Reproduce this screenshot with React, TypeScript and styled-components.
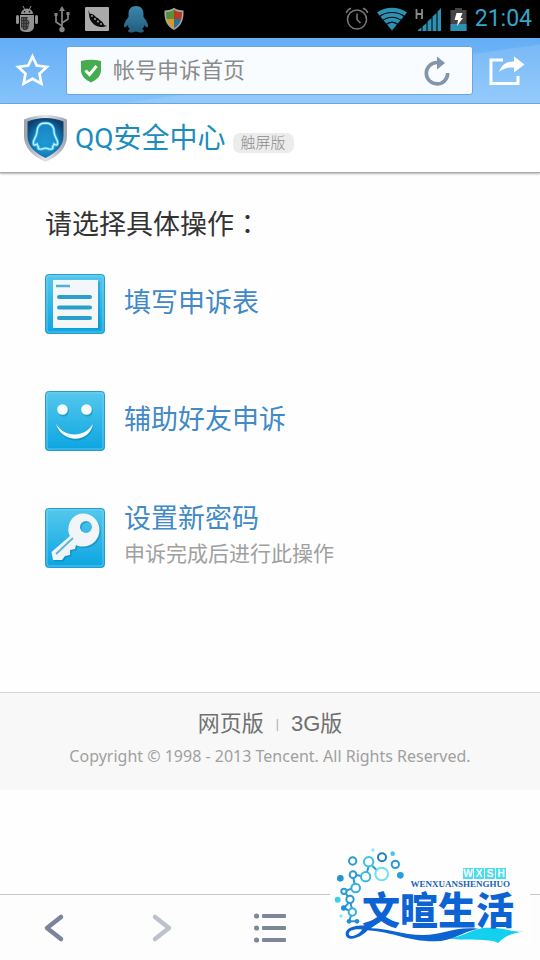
import React from "react";
import styled, { createGlobalStyle } from "styled-components";

const GlobalStyle = createGlobalStyle`
  *, *::before, *::after { box-sizing: border-box; }
  body {
    margin: 0;
    background: #fefefe;
    font-family: "Liberation Sans", "Noto Sans CJK SC", sans-serif;
    font-weight: 400;
    color: #333;
  }
  button, input { font: inherit; color: inherit; }
  svg { display: block; flex: none; }
`;

const Page = styled.div`
  display: flex;
  flex-direction: column;
  min-height: 100vh;
`;

const StatusBar = styled.div`
  display: flex;
  align-items: center;
  justify-content: space-between;
  height: 38px;
  padding: 0 8px 0 15px;
  background: #000;
`;

const IconGroup = styled.div<{ $gap: number }>`
  display: flex;
  align-items: center;
  gap: ${(p) => p.$gap}px;
`;

const Clock = styled.time`
  font-family: Roboto, sans-serif;
  font-size: 23px;
  line-height: 38px;
  color: #35a5cb;
`;

const BrowserBar = styled.div`
  display: flex;
  align-items: center;
  gap: 16px;
  height: 66px;
  padding: 0 15px;
  background:
    linear-gradient(172deg, transparent 58%, rgba(255, 255, 255, 0.12) 59%),
    linear-gradient(#64aef5, #85c3fb);
  border-bottom: 1px solid #6fa9dc;
`;

const IconButton = styled.button`
  display: flex;
  align-items: center;
  justify-content: center;
  padding: 0;
  border: 0;
  background: none;
  cursor: pointer;
`;

const AddressBar = styled.form`
  flex: 1;
  display: flex;
  align-items: center;
  gap: 11px;
  min-width: 0;
  height: 49px;
  padding: 0 22px 0 13px;
  background: #f9fcff;
  border: 1px solid #6da5da;
  border-radius: 3px;
`;

const AddressInput = styled.input`
  flex: 1;
  min-width: 0;
  padding: 0;
  border: 0;
  outline: 0;
  background: none;
  font-size: 22px;
  line-height: 32px;
  color: #8b8b8b;
`;

const SiteHeader = styled.header`
  display: flex;
  align-items: center;
  height: 69px;
  padding: 0 23px;
  background: #fff;
  border-bottom: 1px solid #aaa;
  box-shadow: 0 1px 2px rgba(0, 0, 0, 0.3);
`;

const SiteName = styled.h1`
  margin: 2px 7px 0 7px;
  font-family: Roboto, "Noto Sans CJK SC", sans-serif;
  font-size: 28px;
  line-height: 40px;
  font-weight: 400;
  color: #1a8cbd;
`;

const Edition = styled.span`
  margin-top: 10px;
  padding: 0 8px;
  border-radius: 7px;
  background: #ececec;
  font-size: 15px;
  line-height: 20px;
  font-weight: 300;
  color: #8c8c8c;
`;

const Main = styled.main`
  padding: 32px 45px 124px;
`;

const Heading = styled.h2`
  margin: 0 0 29px;
  font-size: 27px;
  line-height: 40px;
  font-weight: 400;
  color: #333;
`;

const CenteredMark = styled.span`
  font-family: "Noto Sans CJK TC", sans-serif;
  line-height: 1;
`;

const ActionList = styled.ul`
  display: flex;
  flex-direction: column;
  gap: 57px;
  margin: 0;
  padding: 0;
  list-style: none;
`;

const Action = styled.a`
  display: flex;
  align-items: center;
  gap: 19px;
  color: #4189c7;
  text-decoration: none;
`;

const ActionText = styled.span`
  display: flex;
  flex-direction: column;
  gap: 14px;
  padding-bottom: 2px;
`;

const ActionTitle = styled.span`
  font-size: 27px;
  line-height: 20px;
`;

const ActionNote = styled.span`
  font-size: 21px;
  line-height: 22px;
  color: #a0a0a0;
`;

const SiteFooter = styled.footer`
  padding: 15px 0 20px;
  background: #f8f8f8;
  border-top: 1px solid #d5d5d5;
  text-align: center;
`;

const Versions = styled.nav`
  display: flex;
  align-items: center;
  justify-content: center;
  gap: 12px;
  font-size: 22px;
  line-height: 32px;
  color: #707070;
`;

const VersionLink = styled.a`
  color: inherit;
  text-decoration: none;
`;

const Divider = styled.span`
  font-size: 12px;
  color: #aaa;
`;

const Copyright = styled.p`
  margin: 3px 0 0;
  font-family: "Noto Sans", sans-serif;
  font-size: 16px;
  line-height: 27px;
  color: #a0a0a0;
`;

const Toolbar = styled.nav`
  position: relative;
  display: grid;
  grid-template-columns: repeat(5, 1fr);
  height: 66px;
  margin-top: auto;
  background: #fdfdfd;
  border-top: 1px solid #c8c8cc;
`;

const Brand = styled.div`
  position: absolute;
  right: 10px;
  bottom: 16px;
  display: flex;
  flex-direction: column;
  align-items: flex-end;
  width: 200px;
  height: 100px;
  padding: 24px 16px 0 0;
  background: #fefefe;
`;

const BrandArt = styled.svg`
  position: absolute;
  inset: 0;
`;

const BrandTiles = styled.div`
  position: relative;
  display: flex;
  gap: 1px;
  margin-right: 8px;
`;

const BrandTile = styled.span`
  width: 10px;
  background: #4bdcf0;
  font-size: 10px;
  line-height: 11px;
  font-weight: 700;
  text-align: center;
  color: #fff;
`;

const BrandLatin = styled.span`
  position: relative;
  margin-right: 4px;
  font-family: "Liberation Serif", serif;
  font-size: 9px;
  line-height: 11px;
  font-weight: 700;
  color: #1b62b5;
`;

const BrandName = styled.strong`
  position: relative;
  font-family: "Noto Sans CJK SC", sans-serif;
  font-size: 38px;
  line-height: 36px;
  font-weight: 900;
  color: #0b63d4;
`;

const AndroidIcon = () => (
  <svg width="24" height="28" viewBox="0 0 24 28" fill="#929292">
    <path d="M6 9a6 5.5 0 0 1 12 0z" />
    <path d="M8 1l2 4M16 1l-2 4" stroke="#929292" strokeWidth="1" />
    <rect x="1" y="10" width="3" height="9" rx="1.5" />
    <rect x="20" y="10" width="3" height="9" rx="1.5" />
    <path d="M5 10h14v11c0 4-3 6-7 6-4 0-7-1-7-4z" />
    <path d="M6 12h7c-2 3 3 4 1 7-1 3 0 5-3 6-4 0-5-2-5-5z" fill="#333" />
    <path d="M7 14h6M7 17h7M7 20h6M7 23h4" stroke="#999" strokeDasharray="1 1.5" />
    <circle cx="9.5" cy="6.7" r=".8" fill="#000" />
    <circle cx="14.5" cy="6.7" r=".8" fill="#000" />
  </svg>
);

const UsbIcon = () => (
  <svg width="18" height="28" viewBox="0 0 18 28" fill="none" stroke="#858585" strokeWidth="1.7">
    <path d="M9 4v20M9 21l-6-4v-6M9 18l6-4V9" />
    <path d="M9 1l3 5H6zM1.500 8h3v3h-3zM13.500 7h3v3h-3z" fill="#858585" stroke="none" />
    <circle cx="9" cy="24.500" r="2.700" fill="#858585" stroke="none" />
  </svg>
);

const PeaIcon = () => (
  <svg width="24" height="24" viewBox="0 0 24 24">
    <rect width="24" height="24" rx="1" fill="#aaa" />
    <path d="M3 3l1 4c0 8 7 14 14 13l4-1-3-1c-1-4-4-4-6-7-3 0-4-5-8-4z" fill="#080808" />
    <g fill="#999">
      <circle cx="7" cy="9" r="1" />
      <circle cx="10" cy="12" r="1.100" />
      <circle cx="13" cy="14.500" r="1.100" />
      <circle cx="16" cy="17" r="1" />
    </g>
  </svg>
);

const PenguinIcon = () => (
  <svg width="26" height="28" viewBox="0 0 26 28">
    <defs>
      <linearGradient id="penguin" x2="0" y2="1">
        <stop stopColor="#3d87ae" />
        <stop offset="1" stopColor="#225d7c" />
      </linearGradient>
    </defs>
    <path
      fill="url(#penguin)"
      d="M13 1C8 1 5.500 4 5.500 9v3C3 15 1 18 1 21c0 2 2 2 3.500-1 .5 2 1.500 3 2.500 4-4 2-1 4 2 3.500 2 0 3-1 4-1s2 1 4 1c3 .5 6-1.500 2-3.500 1-1 2-2 2.500-4 1.500 3 3.500 3 3.500 1 0-3-2-6-4.500-9V9c0-5-2.500-8-7.500-8z"
    />
  </svg>
);

const ColorShieldIcon = () => (
  <svg width="22" height="24" viewBox="0 0 22 24">
    <defs>
      <clipPath id="colorShield">
        <path d="M11 2.500c2 2 5 2.500 8 2.500 0 8-2 13-8 16.500C5 18 3 13 3 5c3 0 6-.5 8-2.500z" />
      </clipPath>
    </defs>
    <path
      d="M11 .8c2.500 2 5.500 2.700 9.500 2.700C21 13 18 19.500 11 23 4 19.500 1 13 1.500 3.500c4 0 7-.7 9.500-2.700z"
      fill="#a9a9a4"
    />
    <g clipPath="url(#colorShield)">
      <path d="M0 0h11v12H0z" fill="#55903d" />
      <path d="M11 0h11v12H11z" fill="#b43b20" />
      <path d="M0 12h11v12H0z" fill="#d19b2b" />
      <path d="M11 12h11v12H11z" fill="#326e98" />
    </g>
  </svg>
);

const AlarmIcon = () => (
  <svg width="24" height="24" viewBox="0 0 24 24" fill="none" stroke="#777" strokeWidth="1.600">
    <circle cx="12" cy="12.500" r="9.500" />
    <path d="M12 6.500v6l3.500 3.500M1.200 6C2 3.500 3.500 2 6 1.200M22.800 6C22 3.500 20.500 2 18 1.200" />
  </svg>
);

const WifiIcon = () => (
  <svg width="30" height="24" viewBox="0 0 30 24">
    <path d="M15 23.500L0 5.500C8-.8 22-.8 30 5.500z" fill="#2c91b3" />
    <path
      d="M2 10c7-6 19-6 26 0M5 14c6-5 14-5 20 0M8.500 18c4-3.500 9-3.500 13 0"
      fill="none"
      stroke="#02090c"
      strokeWidth="1.200"
    />
  </svg>
);

const SignalIcon = () => (
  <svg width="27" height="25" viewBox="0 0 27 25">
    <path
      d="M3 24h3.500v-3.500L3 23zM7.500 24h4v-8l-4 3.500zM12.500 24h4V11l-4 3.500zM17.500 24h4V6l-4 3.500zM22.500 24H26V1l-3.500 3.500z"
      fill="#2c91b3"
    />
    <path d="M1.500 2v10M7 2v10M1.500 7H7" stroke="#8b8b8b" strokeWidth="1.800" />
  </svg>
);

const BatteryIcon = () => (
  <svg width="17" height="25" viewBox="0 0 17 25">
    <path d="M5 1h7v2h4.500v21H.5V3H5z" fill="#454545" />
    <path d="M.5 17h16v7H.5z" fill="#2c91b3" />
    <path d="M6.500 6h6l-2 5H13L7 19l1-6H4.500z" fill="#fff" />
  </svg>
);

const StarIcon = () => (
  <svg width="35" height="35" viewBox="0 0 35 35">
    <path
      d="M17.500 3.500l4.300 9.100 10 1.300-7.300 6.900 1.900 9.900-8.900-4.900-8.900 4.900 1.900-9.900-7.300-6.900 10-1.300z"
      fill="none"
      stroke="#fff"
      strokeWidth="2.700"
    />
  </svg>
);

const SafeIcon = () => (
  <svg width="22" height="24" viewBox="0 0 22 24">
    <path d="M1 2Q11-.5 21 2v9c0 6-4 9.500-10 12.500C5 20.500 1 17 1 11z" fill="#46ad4e" />
    <path d="M5.500 11.500l4 4 7-8.500" fill="none" stroke="#fff" strokeWidth="3" />
  </svg>
);

const ReloadIcon = () => (
  <svg width="26" height="30" viewBox="0 0 26 30">
    <path d="M13 6.500A10.700 10.700 0 1 0 23.700 17" fill="none" stroke="#8495a9" strokeWidth="3.600" />
    <path d="M13 .5L21 7l-8 6.500z" fill="#8495a9" />
  </svg>
);

const ShareIcon = () => (
  <svg width="36" height="30" viewBox="0 0 36 30">
    <path d="M14 4H2v23.500h27V20" fill="none" stroke="#fff" strokeWidth="3" />
    <path d="M10 16C13 8 18 5.500 25 5.500V.5L35.500 8.500 25 16.500v-5c-6-.5-11 1-15 4.500z" fill="#fff" />
  </svg>
);

const penguinOutline =
  "M22.500 9c-6 0-8.500 4-8.500 9-.3 3-1 4-2.500 7-1 2-1.300 5-.5 6 1 .7 2-.3 3-1 .5 1.500 1 2 1.500 3-1.500 2 1 2.500 3.500 2 1.500-.4 2-.8 3.500-.8s2 .4 3.500.8c2.500.5 5 0 3.500-2 .5-1 1-1.500 1.500-3 1 .7 2 1.700 3 1 .8-1 .5-4-.5-6-1.500-3-2.200-4-2.500-7 0-5-2.500-9-9-9z";

const CenterLogo = () => (
  <svg width="45" height="49" viewBox="0 0 45 49">
    <defs>
      <radialGradient id="logoFill" cy=".6" r=".6">
        <stop stopColor="#27b0ea" />
        <stop offset=".6" stopColor="#1478b4" />
        <stop offset="1" stopColor="#0c4271" />
      </radialGradient>
      <linearGradient id="logoRim">
        <stop stopColor="#9aa1aa" />
        <stop offset=".5" stopColor="#e4e5e9" />
        <stop offset="1" stopColor="#9ea3ac" />
      </linearGradient>
    </defs>
    <path
      d="M22.500 1C29 1 37 2.500 44 5.500V22c0 11-8 20-21.500 26C9 42 1 33 1 22V5.500C8 2.500 16 1 22.500 1z"
      fill="url(#logoRim)"
    />
    <path
      d="M22.500 4C29 4 35 5.500 40.500 7.500V22c0 9-6 16-18 22C10 38 4.500 31 4.500 22V7.500C10 5.500 16 4 22.500 4z"
      fill="url(#logoFill)"
    />
    <path d={penguinOutline} fill="#1b8fcd" stroke="#51cdfb" strokeWidth="3" opacity=".7" />
    <path d={penguinOutline} fill="none" stroke="#c4f2ff" strokeWidth="1.300" />
  </svg>
);

const TileArt = ({ children }: { children: React.ReactNode }) => (
  <svg width="60" height="60" viewBox="0 0 60 60">
    <defs>
      <linearGradient id="tileFill" x2="0" y2="1">
        <stop stopColor="#55c8ed" />
        <stop offset="1" stopColor="#0ba5e2" />
      </linearGradient>
    </defs>
    <rect x=".5" y=".5" width="59" height="59" rx="3" fill="url(#tileFill)" stroke="#2a9cca" />
    <rect x="2" y="2" width="56" height="56" rx="2" fill="none" stroke="#7fd6f3" opacity=".7" />
    {children}
  </svg>
);

const FormArt = () => (
  <TileArt>
    <path d="M10 8h45v47H10z" fill="#087eb0" opacity=".35" />
    <path d="M8 6h45v48H8z" fill="#f4f7f9" />
    <path d="M11 12h14" stroke="#4eb2d4" strokeWidth="2.500" />
    <path d="M14 23h31M14 33.500h31M14 44h31" stroke="#2b9fcb" strokeWidth="4" strokeLinecap="round" />
  </TileArt>
);

const SmileArt = () => (
  <TileArt>
    <g fill="#0874a5" opacity=".4">
      <circle cx="18.500" cy="20" r="5.500" />
      <circle cx="42.500" cy="20" r="5.500" />
      <path d="M11 34c9 14 29 14 38 0-3 20-32 21-38 0z" />
    </g>
    <g fill="#f5fbfe">
      <circle cx="17.500" cy="18.500" r="5.300" />
      <circle cx="41.500" cy="18.500" r="5.300" />
      <path d="M11 33c9 14 28 14 37 0-3 19-31 20-37 0z" />
    </g>
  </TileArt>
);

const keyShape =
  "M38 5.500a16.500 16.500 0 0 1 0 33c-3 0-5-.5-7-1.500l-1 4-5 1v5l-5 1-3 4H8l-1.500-8L25 28c-1.500-3-2-5-1.500-8C24 12 30 5.500 38 5.500zM41 13a6 6 0 1 0 0 12 6 6 0 0 0 0-12z";

const KeyArt = () => (
  <TileArt>
    <path d={keyShape} transform="translate(1.500 1.500)" fill="#0874a5" fillRule="evenodd" opacity=".4" />
    <path d={keyShape} fill="#f1f5f7" fillRule="evenodd" />
    <path d="M11 46l17-16" stroke="#5eb5d5" strokeWidth="1.800" />
  </TileArt>
);

const ChevronIcon = ({ forward = false }: { forward?: boolean }) => (
  <svg width="22" height="30" viewBox="0 0 22 30" fill="none" strokeLinecap="round" strokeLinejoin="round">
    <path
      d={forward ? "M4 4l14 11L4 26" : "M18 4L4 15l14 11"}
      stroke={forward ? "#bcc1cc" : "#7a849b"}
      strokeWidth="4.500"
    />
  </svg>
);

const MenuIcon = () => (
  <svg width="34" height="30" viewBox="0 0 34 30" fill="#7d8798">
    {[3, 15, 27].map((y) => (
      <g key={y}>
        <circle cx="3.500" cy={y} r="2.600" />
        <rect x="9" y={y - 2} width="24" height="4" rx="1" />
      </g>
    ))}
  </svg>
);

const rings = [
  [83, 60, 11, "#2b9ad6"],
  [131, 62, 14, "#35c3e4"],
  [171, 49, 12, "#217fc0"],
  [211, 70, 11, "#2b9ad6"],
  [170, 99, 19, "#72e1ee"],
  [122, 107, 14, "#35b9e0"],
  [84, 101, 10, "#2b9ad6"],
  [92, 141, 13, "#35aede"],
  [57, 151, 8, "#2b9ad6"],
  [75, 175, 11, "#2b9ad6"],
  [82, 213, 11, "#35aede"],
] as const;

const dots = [
  [144, 27, 5, "#8ce7ee"],
  [203, 38, 7, "#45c9df"],
  [226, 103, 10, "#22a1e2"],
  [46, 112, 10, "#2691d4"],
  [38, 176, 9, "#3dd2e6"],
  [48, 225, 5, "#8ce7ee"],
  [56, 201, 8, "#1e8ed8"],
  [72, 241, 7, "#1e8ed8"],
  [96, 241, 7, "#1e8ed8"],
] as const;

const BrandDrawing = () => (
  <BrandArt width="200" height="100" viewBox="15 9 600 300" aria-hidden="true">
    <path
      d="M131 76l-5 18M108 105l-14-3M85 111l4 18M79 143l-14 6M62 158l7 8M77 186l3 16M56 201l16-16M56 201l16 8M78 224l-6 17h24M142 75l14 13"
      fill="none"
      stroke="#2b9ad6"
      strokeWidth="6"
    />
    {rings.map(([x, y, r, color]) => (
      <circle key={`${x}-${y}`} cx={x} cy={y} r={r} fill="#fff" stroke={color} strokeWidth="6" />
    ))}
    {dots.map(([x, y, r, color]) => (
      <circle key={`${x}-${y}`} cx={x} cy={y} r={r} fill={color} />
    ))}
    <path d="M370 292c60-8 70-34 130-32 40 2 60 12 95 12-32 3-52 12-76 34-30-16-90-4-149-14z" fill="#12d0ee" />
    <path
      d="M150 252c-35 2-86-2-88 26 0 24 40 18 66-10 82 6 120 34 202 33 52-1 80-28 130-38-70-8-110 19-165 19-65 0-110-20-157-20l12-10zM112 266c-12 15-32 24-40 16-5-12 16-20 40-16z"
      fill="#0b63d4"
      fillRule="evenodd"
    />
  </BrandArt>
);

const actions = [
  { title: "填写申诉表", art: <FormArt /> },
  { title: "辅助好友申诉", art: <SmileArt /> },
  { title: "设置新密码", note: "申诉完成后进行此操作", art: <KeyArt /> },
];

export default function App() {
  return (
    <Page>
      <GlobalStyle />
      <StatusBar>
        <IconGroup $gap={14}>
          <AndroidIcon />
          <UsbIcon />
          <PeaIcon />
          <PenguinIcon />
          <ColorShieldIcon />
        </IconGroup>
        <IconGroup $gap={8}>
          <AlarmIcon />
          <WifiIcon />
          <SignalIcon />
          <BatteryIcon />
          <Clock>21:04</Clock>
        </IconGroup>
      </StatusBar>

      <BrowserBar>
        <IconButton type="button" aria-label="收藏">
          <StarIcon />
        </IconButton>
        <AddressBar onSubmit={(e) => e.preventDefault()}>
          <SafeIcon />
          <AddressInput type="text" aria-label="地址" defaultValue="帐号申诉首页" />
          <IconButton type="button" aria-label="刷新">
            <ReloadIcon />
          </IconButton>
        </AddressBar>
        <IconButton type="button" aria-label="分享">
          <ShareIcon />
        </IconButton>
      </BrowserBar>

      <SiteHeader>
        <CenterLogo />
        <SiteName>QQ安全中心</SiteName>
        <Edition>触屏版</Edition>
      </SiteHeader>

      <Main>
        <Heading>
          请选择具体操作<CenteredMark>：</CenteredMark>
        </Heading>
        <ActionList>
          {actions.map(({ title, note, art }) => (
            <li key={title}>
              <Action href="#">
                {art}
                <ActionText>
                  <ActionTitle>{title}</ActionTitle>
                  {note && <ActionNote>{note}</ActionNote>}
                </ActionText>
              </Action>
            </li>
          ))}
        </ActionList>
      </Main>

      <SiteFooter>
        <Versions>
          <VersionLink href="#">网页版</VersionLink>
          <Divider>|</Divider>
          <VersionLink href="#">3G版</VersionLink>
        </Versions>
        <Copyright>Copyright © 1998 - 2013 Tencent. All Rights Reserved.</Copyright>
      </SiteFooter>

      <Toolbar>
        <IconButton type="button" aria-label="后退">
          <ChevronIcon />
        </IconButton>
        <IconButton type="button" aria-label="前进">
          <ChevronIcon forward />
        </IconButton>
        <IconButton type="button" aria-label="菜单">
          <MenuIcon />
        </IconButton>
        <Brand>
          <BrandDrawing />
          <BrandTiles>
            {["W", "X", "S", "H"].map((letter) => (
              <BrandTile key={letter}>{letter}</BrandTile>
            ))}
          </BrandTiles>
          <BrandLatin>WENXUANSHENGHUO</BrandLatin>
          <BrandName>文暄生活</BrandName>
        </Brand>
      </Toolbar>
    </Page>
  );
}
